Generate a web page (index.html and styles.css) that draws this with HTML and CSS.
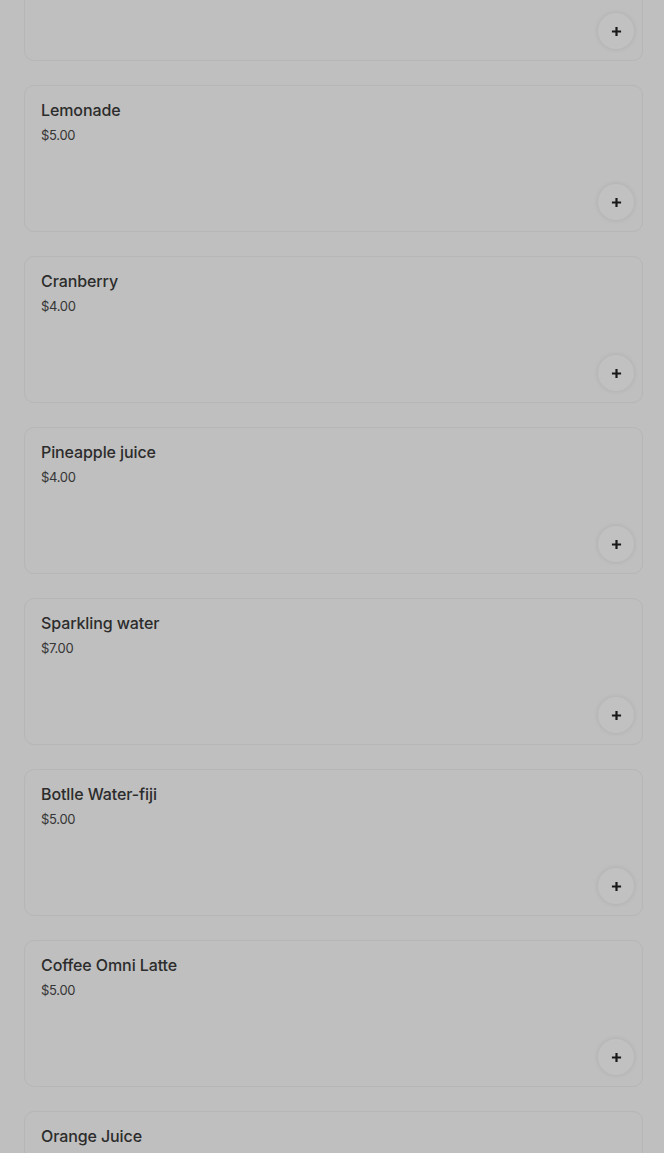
FILE: index.html
```html
<!DOCTYPE html>
<html lang="en">
<head>
    <meta charset="UTF-8">
    <meta name="viewport" content="width=device-width, initial-scale=1.0">
    <title>Menu - Drinks</title>
    <link rel="stylesheet" href="styles.css">
</head>
<body>

    <div class="menu-list">
        <div class="item-card">
            <button type="button" class="add-btn" aria-label="Add"><svg viewBox="0 0 12 12"><path d="M6 1v10M1 6h10"/></svg></button>
        </div>
        <div class="item-card">
            <div class="item-name">Lemonade</div>
            <div class="item-price">$5.00</div>
            <button type="button" class="add-btn" aria-label="Add"><svg viewBox="0 0 12 12"><path d="M6 1v10M1 6h10"/></svg></button>
        </div>
        <div class="item-card">
            <div class="item-name">Cranberry</div>
            <div class="item-price">$4.00</div>
            <button type="button" class="add-btn" aria-label="Add"><svg viewBox="0 0 12 12"><path d="M6 1v10M1 6h10"/></svg></button>
        </div>
        <div class="item-card">
            <div class="item-name">Pineapple juice</div>
            <div class="item-price">$4.00</div>
            <button type="button" class="add-btn" aria-label="Add"><svg viewBox="0 0 12 12"><path d="M6 1v10M1 6h10"/></svg></button>
        </div>
        <div class="item-card">
            <div class="item-name">Sparkling water</div>
            <div class="item-price">$7.00</div>
            <button type="button" class="add-btn" aria-label="Add"><svg viewBox="0 0 12 12"><path d="M6 1v10M1 6h10"/></svg></button>
        </div>
        <div class="item-card">
            <div class="item-name">Botlle Water-fiji</div>
            <div class="item-price">$5.00</div>
            <button type="button" class="add-btn" aria-label="Add"><svg viewBox="0 0 12 12"><path d="M6 1v10M1 6h10"/></svg></button>
        </div>
        <div class="item-card">
            <div class="item-name">Coffee Omni Latte</div>
            <div class="item-price">$5.00</div>
            <button type="button" class="add-btn" aria-label="Add"><svg viewBox="0 0 12 12"><path d="M6 1v10M1 6h10"/></svg></button>
        </div>
        <div class="item-card">
            <div class="item-name">Orange Juice</div>
        </div>
    </div>

    <!-- fondo oscuro del modal -->
    <div class="backdrop"></div>

</body>
</html>
```

FILE: styles.css
```css
html, body {
    margin: 0;
    height: 100%;
    overflow: hidden;
}
body {
    font-family: Inter, "Noto Sans", Arial, sans-serif;
    background-color: #fbfbfb;
    color: #000;
}
.menu-list {
    display: flex;
    flex-direction: column;
    gap: 24px;
    margin-top: -86px;
    padding: 0 21px 0 24px;
}
.item-card {
    box-sizing: border-box;
    height: 147px;
    flex-shrink: 0;
    display: flex;
    flex-direction: column;
    padding: 14px 8px 11px 16px;
    border: 1px solid #efefef;
    border-radius: 10px;
    background-color: #fbfbfb;
}
.item-name {
    font-size: 16px;
    line-height: 20px;
    font-weight: 500;
    letter-spacing: -0.1px;
    color: #3a3a3a;
}
.item-price {
    margin-top: 6px;
    font-size: 13px;
    line-height: 18px;
    letter-spacing: -0.3px;
    color: #484848;
}
.add-btn {
    margin-top: auto;
    align-self: flex-end;
    width: 36px;
    height: 36px;
    border: none;
    border-radius: 50%;
    padding: 0;
    background-color: #fefefe;
    box-shadow: 0 0 5px rgba(0, 0, 0, 0.1);
    display: flex;
    align-items: center;
    justify-content: center;
    cursor: pointer;
}
.add-btn svg {
    width: 11px;
    height: 11px;
    stroke: #222;
    stroke-width: 2.4;
    fill: none;
}
.backdrop {
    position: fixed;
    inset: 0;
    background-color: rgba(0, 0, 0, 0.24);
}
```
